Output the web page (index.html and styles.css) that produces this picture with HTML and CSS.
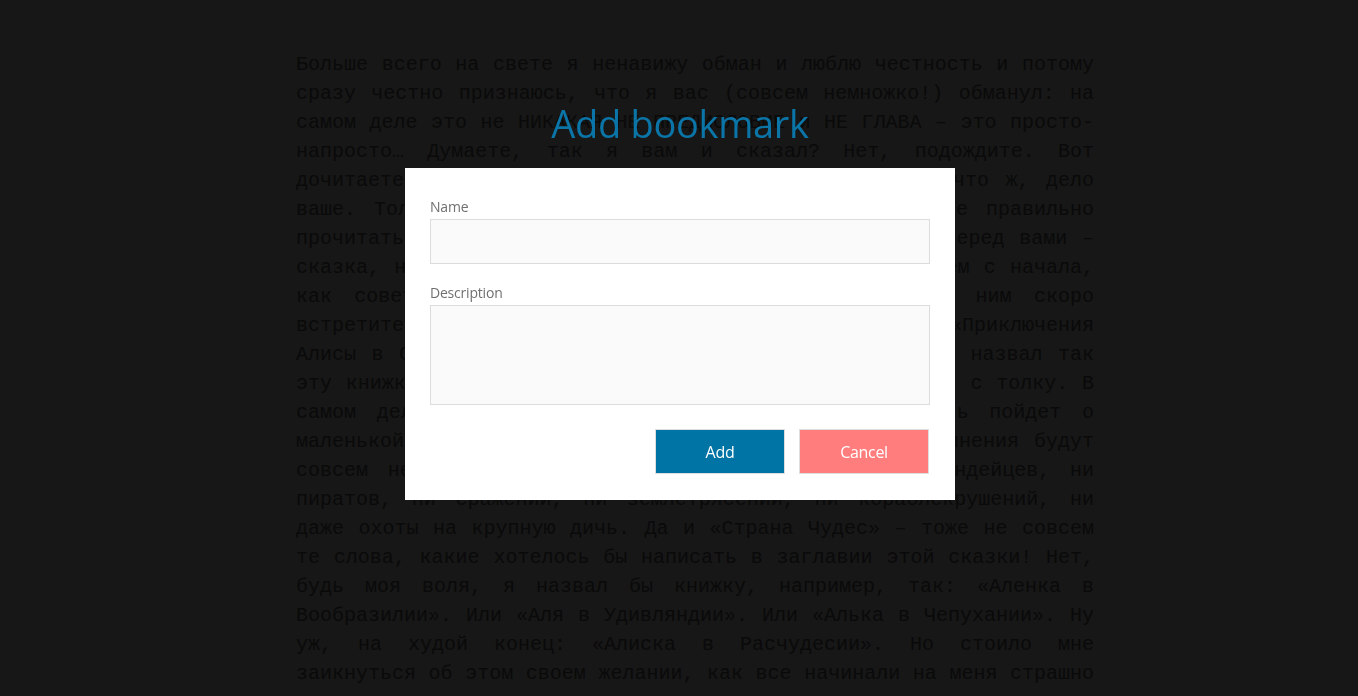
FILE: index.html
```html
<!DOCTYPE html>
<html lang="ru">
<head>
<meta charset="utf-8">
<title>Add bookmark</title>
<link rel="stylesheet" href="styles.css">
</head>
<body>
<main class="page">
<p class="story">Больше всего на свете я ненавижу обман и люблю честность и потому сразу честно признаюсь, что я вас (совсем немножко!) обманул: на самом деле это не НИКАКАЯ НЕ ПРЕДИСЛОВИЕ и НЕ ГЛАВА – это просто-напросто… Думаете, так я вам и сказал? Нет, подождите. Вот дочитаете до конца, тогда и поймете. А не хотите – что ж, дело ваше. Только тогда вы, может быть, не сумеете вполне правильно прочитать и понять эту книгу. Потому что ведь здесь перед вами – сказка, необыкновенная сказка. И поэтому давайте начнем с начала, как советовал Король в этой сказке, и вы тоже с ним скоро встретитесь. Начать с того, что сказка называется «Приключения Алисы в Стране Чудес». Но, по правде говоря, я бы не назвал так эту книжку: это название, по-моему, может только сбить с толку. В самом деле: вы, наверное, подумаете, что здесь речь пойдет о маленькой девочке Алисе и что все ее похождения и волнения будут совсем необычными. А на самом деле здесь нет ни индейцев, ни пиратов, ни сражений, ни землетрясений, ни кораблекрушений, ни даже охоты на крупную дичь. Да и «Страна Чудес» – тоже не совсем те слова, какие хотелось бы написать в заглавии этой сказки! Нет, будь моя воля, я назвал бы книжку, например, так: «Аленка в Вообразилии». Или «Аля в Удивляндии». Или «Алька в Чепухании». Ну уж, на худой конец: «Алиска в Расчудесии». Но стоило мне заикнуться об этом своем желании, как все начинали на меня страшно сердиться и возмущаться, и говорить, что так нельзя, что все давно знают эту книжку именно под этим названием.</p>
</main>

<div class="overlay">
  <h1 class="modal-title">Add bookmark</h1>
  <form class="dialog">
    <label class="field">
      <span class="field-label">Name</span>
      <input class="field-input" type="text">
    </label>
    <label class="field field-desc">
      <span class="field-label">Description</span>
      <textarea class="field-area"></textarea>
    </label>
    <div class="actions">
      <button type="button" class="btn btn-add">Add</button>
      <button type="button" class="btn btn-cancel">Cancel</button>
    </div>
  </form>
</div>
</body>
</html>
```
FILE: styles.css
```css
html, body {
  margin: 0;
  padding: 0;
  background: #171717;
  height: 100%;
  overflow: hidden;
}

.page {
  width: 798px;
  margin-left: 296px;
  padding-top: 50px;
}

.story {
  margin: 0;
  font-family: "Liberation Mono", "Courier New", monospace;
  font-size: 20px;
  line-height: 29px;
  text-align: justify;
  color: #0a0a0a;
}

.overlay {
  position: fixed;
  inset: 0;
  display: flex;
  flex-direction: column;
  align-items: center;
  padding-top: 99px;
  padding-left: 2px;
  font-family: "Open Sans", "Noto Sans", sans-serif;
}

.modal-title {
  margin: 0 0 21px;
  font-weight: 400;
  font-size: 38px;
  line-height: 48px;
  color: #0b75a8;
  letter-spacing: -0.3px;
}

.dialog {
  width: 550px;
  box-sizing: border-box;
  background: #ffffff;
  padding: 30px 25px 26px;
  display: flex;
  flex-direction: column;
}

.field {
  display: flex;
  flex-direction: column;
  gap: 3px;
}

.field-desc {
  margin-top: 20px;
}

.field-label {
  font-size: 14px;
  line-height: 18px;
  color: #707070;
  letter-spacing: -0.2px;
}

.field-input,
.field-area {
  display: block;
  width: 100%;
  box-sizing: border-box;
  margin: 0;
  border: 1px solid #dcdcdc;
  background: #fafafa;
  border-radius: 0;
  outline: none;
  font-family: inherit;
}

.field-input {
  height: 45px;
}

.field-area {
  height: 100px;
  resize: none;
}

.actions {
  display: flex;
  justify-content: flex-end;
  gap: 14px;
  margin-top: 24px;
  padding-right: 1px;
}

.btn {
  width: 130px;
  height: 45px;
  border: 1px solid #dedede;
  border-radius: 0;
  color: #ffffff;
  font-family: "Open Sans", "Noto Sans", sans-serif;
  font-size: 16px;
  letter-spacing: -0.3px;
  padding: 0;
  cursor: pointer;
}

.btn-add {
  background: #0074a4;
}

.btn-cancel {
  background: #ff7d7d;
}
```
